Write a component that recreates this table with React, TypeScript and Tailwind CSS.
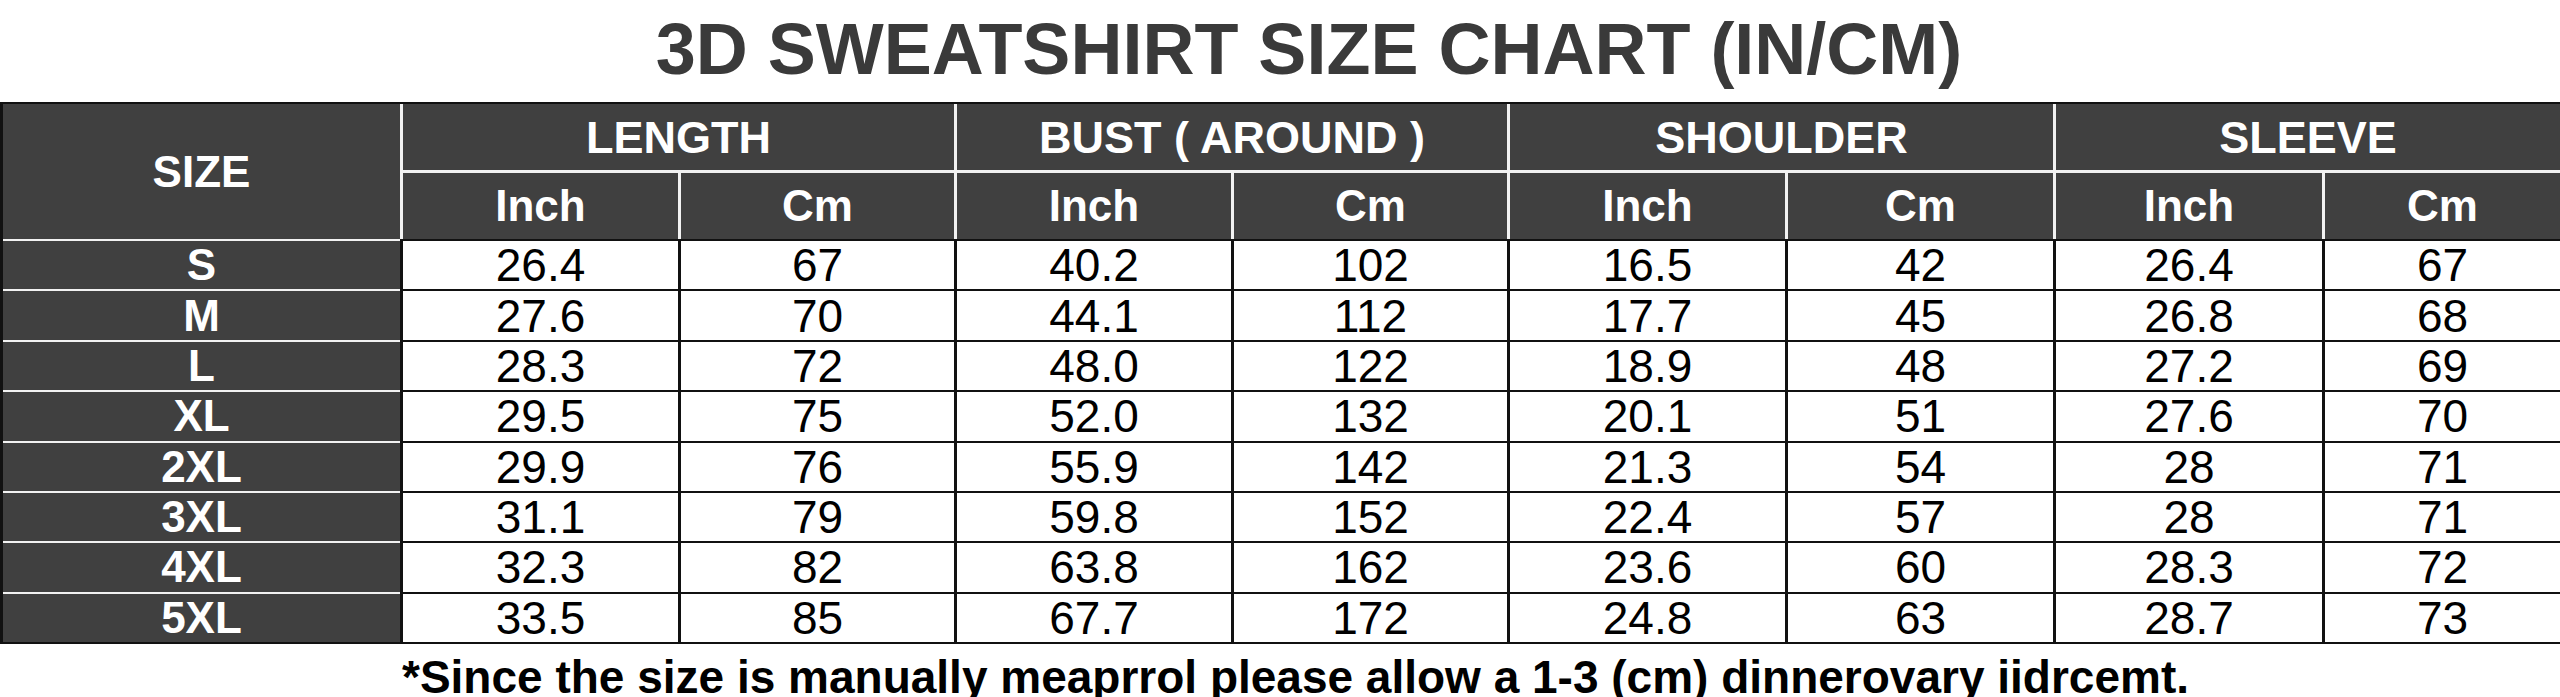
import React from "react";

const rows: [string, string[]][] = [
  ["S", ["26.4", "67", "40.2", "102", "16.5", "42", "26.4", "67"]],
  ["M", ["27.6", "70", "44.1", "112", "17.7", "45", "26.8", "68"]],
  ["L", ["28.3", "72", "48.0", "122", "18.9", "48", "27.2", "69"]],
  ["XL", ["29.5", "75", "52.0", "132", "20.1", "51", "27.6", "70"]],
  ["2XL", ["29.9", "76", "55.9", "142", "21.3", "54", "28", "71"]],
  ["3XL", ["31.1", "79", "59.8", "152", "22.4", "57", "28", "71"]],
  ["4XL", ["32.3", "82", "63.8", "162", "23.6", "60", "28.3", "72"]],
  ["5XL", ["33.5", "85", "67.7", "172", "24.8", "63", "28.7", "73"]],
];

const groups = ["LENGTH", "BUST ( AROUND )", "SHOULDER", "SLEEVE"];

export default function App() {
  return (
    <div className="w-[2560px] h-[697px] bg-white overflow-hidden font-['Liberation_Sans',Arial,sans-serif]">
      <div className="h-[102px] pt-[13px] pl-[58px] flex justify-center">
        <h1 className="text-[72px] leading-[72px] font-bold text-[#3a3a3a] whitespace-nowrap">
          3D SWEATSHIRT SIZE CHART (IN/CM)
        </h1>
      </div>

      <div className="grid grid-cols-[397px_278px_276px_277px_276px_278px_268px_269px_1fr] grid-rows-[66px_69px_repeat(8,50.375px)] border-t-2 border-b-2 border-l-[3px] border-[#111]">
        <div className="row-span-2 bg-[#404040] flex items-center justify-center text-white font-bold text-[44px] leading-none">
          SIZE
        </div>
        {groups.map((g) => (
          <div
            key={g}
            className="col-span-2 bg-[#404040] border-l-[3px] border-[#f2f2f2] flex items-center justify-center text-white font-bold text-[45px] leading-none whitespace-nowrap"
          >
            {g}
          </div>
        ))}
        {groups.flatMap((g) =>
          ["Inch", "Cm"].map((u) => (
            <div
              key={g + u}
              className="bg-[#404040] border-l-[3px] border-t-[3px] border-[#f2f2f2] flex items-center justify-center text-white font-bold text-[44px] leading-none"
            >
              {u}
            </div>
          ))
        )}
        {rows.map(([size, vals]) => (
          <React.Fragment key={size}>
            <div className="bg-[#404040] border-t-2 border-[#f2f2f2] flex items-center justify-center text-white font-bold text-[44px] leading-none">
              {size}
            </div>
            {vals.map((v, i) => (
              <div
                key={i}
                className="bg-white border-l-[3px] border-t-2 border-[#111] flex items-center justify-center text-black text-[46px] leading-none"
              >
                {v}
              </div>
            ))}
          </React.Fragment>
        ))}
      </div>

      <div className="pt-[10px] pl-[402px] whitespace-nowrap text-[46px] leading-[46px] font-bold text-black">
        *Since the size is manually meaprrol please allow a 1-3 (cm) dinnerovary iidrcemt.
      </div>
    </div>
  );
}
